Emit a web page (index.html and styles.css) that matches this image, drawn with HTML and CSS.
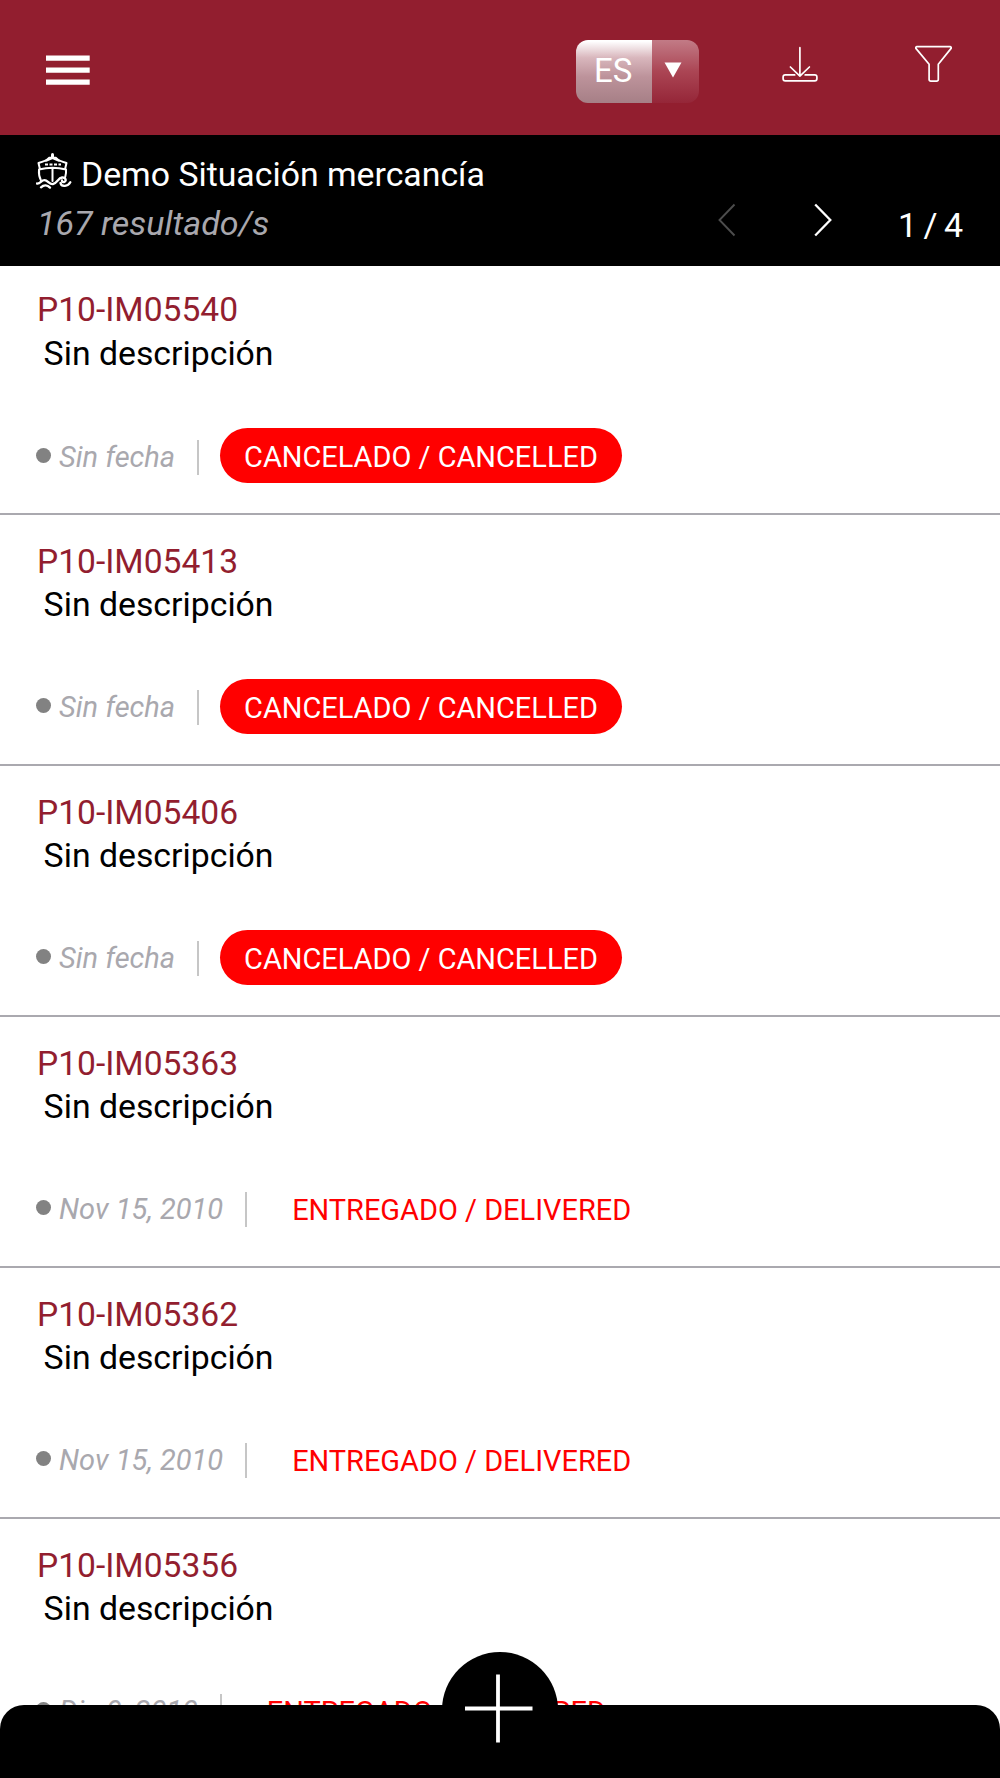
FILE: index.html
```html
<!DOCTYPE html>
<html lang="es">
<head>
  <meta charset="UTF-8" />
  <meta name="viewport" content="width=device-width, initial-scale=1.0"/>
  <title>Demo Situación mercancía</title>
  <link rel="stylesheet" href="styles.css">
</head>
<body>
  <header class="topbar">
    <svg class="menu" width="44" height="30" viewBox="0 0 44 30">
      <path d="M0 3.200h43.700M0 15.200h43.700M0 27.200h43.700" stroke="#fff" stroke-width="5.200"/>
    </svg>
    <div class="lang">
      <span class="lang-code">ES</span>
      <span class="lang-arrow"><svg width="18" height="16" viewBox="0 0 18 16"><path d="M.5.5h17L9 15.500z" fill="#fff"/></svg></span>
    </div>
    <svg class="download" width="36" height="36" viewBox="0 0 36 36" fill="none" stroke="#fff" stroke-width="1.700" stroke-linecap="round" stroke-linejoin="round">
      <path d="M17.900 1.700v28.400M8.400 21l9.500 9.200 9.500-9.200"/>
      <path d="M12.700 28.900H3.300a2.200 2.200 0 0 0-2.200 2.200v1.600a2.200 2.200 0 0 0 2.200 2.200h29.400a2.200 2.200 0 0 0 2.200-2.200v-1.600a2.200 2.200 0 0 0-2.200-2.200h-9.500"/>
    </svg>
    <svg class="filter" width="37" height="37" viewBox="0 0 37 37" fill="none" stroke="#fff" stroke-width="1.700" stroke-linejoin="round">
      <path d="M2 1.600h33a1.200 1.200 0 0 1 .9 2L23.300 19.300v15.200a1.600 1.600 0 0 1-1.600 1.600h-6a1.600 1.600 0 0 1-1.600-1.600V19.300L1.100 3.600a1.200 1.200 0 0 1 .9-2z"/>
    </svg>
  </header>

  <section class="heading">
    <div class="heading-text">
      <h1>
        <svg class="ship" width="36" height="36" viewBox="0 0 36 36" fill="none" stroke="#fff" stroke-width="2" stroke-linecap="round" stroke-linejoin="round">
          <path d="M16.500 1.500v3" stroke-width="3"/>
          <path d="M2.500 10C8 8.500 11 7 13 4.800h7c2 2.200 5 3.700 10.500 5.200l-1.300 5.500M2.500 10l1.300 5.500"/>
          <path d="M10 7.800L16.500 5l6.500 2.800"/>
          <path d="M9 11.500h16" stroke-width="2.200" stroke-linecap="butt" stroke-dasharray="3 1.500"/>
          <path d="M3 16.500c9-2.200 18-2.200 27 0M3 16.500c-.3 4 .2 7.500 1.800 10.500M30 16.500c.3 3 0 5-.8 7.500M16.500 15.500V28"/>
          <path d="M1 30.500c3.500.5 4-3.300 7.500-3.300s4.500 4.300 8.500 3.800 5-6 9-6.500c4-.3 4.800 4 2 4.500-2 .3-2-1.500-2-1.500M24.500 30c1 4.500 7.500 3.500 9.800-.7M5 34.300c3-2.800 6.500-2.300 9 .3" stroke-width="2.300"/>
        </svg>
        Demo Situación mercancía
      </h1>
      <p class="results">167 resultado/s</p>
    </div>
    <nav class="pager">
      <svg class="prev" width="18" height="34" viewBox="0 0 18 34"><path d="M16.500 1.500L1.500 17l15 15.500" fill="none" stroke="#4d4d4d" stroke-width="1.900"/></svg>
      <svg class="next" width="18" height="34" viewBox="0 0 18 34"><path d="M1.200 1.500L16.300 17 1.200 32.500" fill="none" stroke="#fff" stroke-width="2.300"/></svg>
      <span class="page">1 / 4</span>
    </nav>
  </section>

  <main class="list">
    <article class="item">
      <h2>P10-IM05540</h2>
      <p class="desc">Sin descripción</p>
      <div class="meta"><span class="dot"></span><span class="date">Sin fecha</span><span class="status cancelled">CANCELADO / CANCELLED</span></div>
    </article>
    <article class="item">
      <h2>P10-IM05413</h2>
      <p class="desc">Sin descripción</p>
      <div class="meta"><span class="dot"></span><span class="date">Sin fecha</span><span class="status cancelled">CANCELADO / CANCELLED</span></div>
    </article>
    <article class="item">
      <h2>P10-IM05406</h2>
      <p class="desc">Sin descripción</p>
      <div class="meta"><span class="dot"></span><span class="date">Sin fecha</span><span class="status cancelled">CANCELADO / CANCELLED</span></div>
    </article>
    <article class="item">
      <h2>P10-IM05363</h2>
      <p class="desc">Sin descripción</p>
      <div class="meta"><span class="dot"></span><span class="date">Nov 15, 2010</span><span class="status">ENTREGADO / DELIVERED</span></div>
    </article>
    <article class="item">
      <h2>P10-IM05362</h2>
      <p class="desc">Sin descripción</p>
      <div class="meta"><span class="dot"></span><span class="date">Nov 15, 2010</span><span class="status">ENTREGADO / DELIVERED</span></div>
    </article>
    <article class="item">
      <h2>P10-IM05356</h2>
      <p class="desc">Sin descripción</p>
      <div class="meta"><span class="dot"></span><span class="date">Dic 9, 2010</span><span class="status">ENTREGADO / DELIVERED</span></div>
    </article>
  </main>

  <footer class="bottombar">
    <button class="add" aria-label="Añadir">
      <svg width="70" height="72" viewBox="0 0 70 72"><path d="M33 1.500v68M0 35.500h67.500" stroke="#fff" stroke-width="3.800"/></svg>
    </button>
  </footer>
</body>
</html>
```
FILE: styles.css
```css
* {
  box-sizing: border-box;
}

body {
  margin: 0;
  height: 1778px;
  overflow: hidden;
  background: #fff;
  color: #000;
  font-family: Roboto, sans-serif;
}

h1, h2, p {
  margin: 0;
  font-weight: 400;
}

svg {
  display: block;
  flex: none;
}

.topbar {
  display: flex;
  align-items: flex-start;
  height: 135px;
  background: #921e2f;
}

.menu {
  margin: 55px 0 0 46px;
}

.lang {
  display: flex;
  width: 123px;
  height: 63px;
  margin: 40px 0 0 486px;
  border-radius: 12px;
  overflow: hidden;
}

.lang-code {
  width: 76px;
  padding-left: 18px;
  background: linear-gradient(#fff 2%, #d9b7bd 28%, #bd939b 58%, #a67f86);
  color: #fff;
  font-size: 33px;
  line-height: 61px;
}

.lang-arrow {
  flex: 1;
  padding: 22px 0 0 12px;
  background: linear-gradient(#c27b86, #ab4554 50%, #952638);
}

.download {
  margin: 46px 0 0 83px;
}

.filter {
  margin: 45px 0 0 97px;
}

.heading {
  display: flex;
  justify-content: space-between;
  height: 131px;
  padding: 19px 37px 0 37px;
  background: #000;
  color: #fff;
}

.heading h1 {
  display: flex;
  gap: 8px;
  font-size: 33.8px;
  line-height: 42px;
}

.ship {
  margin: -1px 1px 0 -1px;
}

.results {
  margin-top: 6px;
  color: #a9a8ae;
  font-size: 34px;
  font-style: italic;
  line-height: 42px;
}

.pager {
  display: flex;
  padding-top: 49px;
}

.next {
  margin-left: 78px;
}

.page {
  margin: 1px 1px 0 66px;
  font-size: 34px;
  letter-spacing: -1px;
  line-height: 43px;
}

.item {
  height: 251.1px;
  padding: 25px 37px 0;
  border-bottom: 2px solid #aaa9af;
}

.item:first-child {
  height: 248.5px;
  padding-top: 22px;
}

.item h2 {
  color: #921e2f;
  font-size: 33.6px;
  line-height: 43.5px;
}

.desc {
  padding-left: 6.6px;
  font-size: 33.8px;
  line-height: 43.5px;
}

.meta {
  display: flex;
  align-items: center;
  height: 55px;
  margin-top: 52px;
  font-size: 29px;
}

.item:first-child .meta {
  margin-top: 53px;
}

.dot {
  width: 15px;
  height: 15px;
  margin: -1px 8px 0 -1px;
  border-radius: 50%;
  background: #828282;
}

.date {
  margin-top: 3px;
  padding-right: 22px;
  border-right: 2px solid #c6c6c6;
  color: #a9a8ae;
  font-style: italic;
  line-height: 35px;
}

.status {
  height: 55px;
  margin-left: 21px;
  padding: 0 24px;
  border-radius: 28px;
  color: #f00;
  font-size: 28.95px;
  line-height: 58px;
}

.cancelled {
  background: #f00;
  color: #fff;
}

/* fixed bar with the add button rising over its edge */
.bottombar {
  position: fixed;
  left: 0;
  right: 0;
  bottom: 0;
  height: 73px;
  border-radius: 24px 24px 0 0;
  background: #000;
}

.add {
  display: flex;
  align-items: flex-start;
  position: absolute;
  top: -53px;
  left: 442px;
  width: 116px;
  height: 116px;
  padding: 21px 0 0 23px;
  border: none;
  border-radius: 50%;
  background: #000;
}
```
